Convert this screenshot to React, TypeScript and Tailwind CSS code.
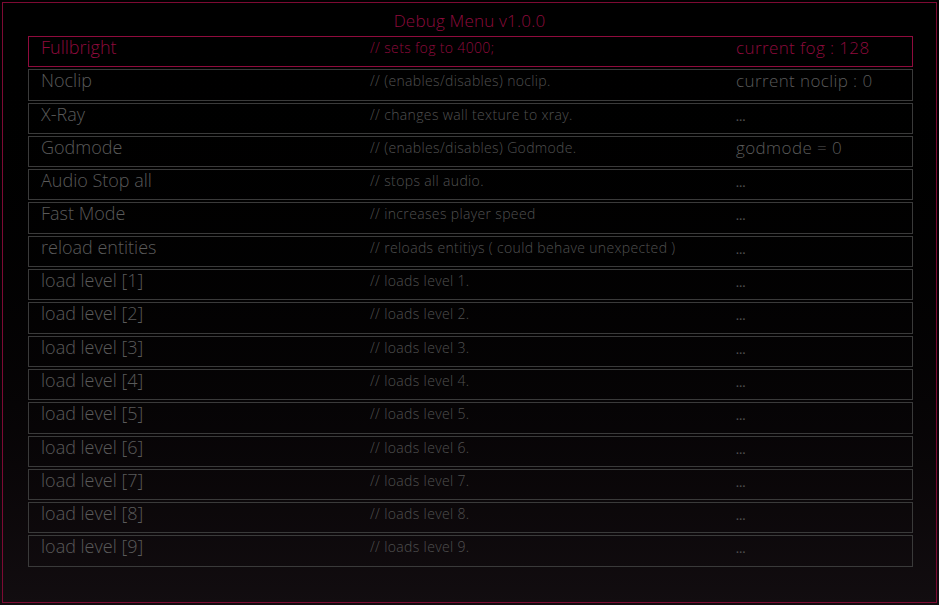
const rows: { name: string; desc: string; value: string }[] = [
    { name: "Fullbright", desc: "// sets fog to 4000;", value: "current fog : 128" },
    { name: "Noclip", desc: "// (enables/disables) noclip.", value: "current noclip : 0" },
    { name: "X-Ray", desc: "// changes wall texture to xray.", value: "..." },
    { name: "Godmode", desc: "// (enables/disables) Godmode.", value: "godmode = 0" },
    { name: "Audio Stop all", desc: "// stops all audio.", value: "..." },
    { name: "Fast Mode", desc: "// increases player speed", value: "..." },
    { name: "reload entities", desc: "// reloads entitiys ( could behave unexpected )", value: "..." },
    ...[1, 2, 3, 4, 5, 6, 7, 8, 9].map((n) => ({
        name: `load level [${n}]`,
        desc: `// loads level ${n}.`,
        value: "...",
    })),
];

const App = () => {
    return (
        <div
            className="w-[939px] h-[605px] p-[2px] bg-gradient-to-b from-black to-[#120d10]"
            style={{ fontFamily: '"Open Sans", "Noto Sans", sans-serif' }}
        >
            <div className="h-full border border-[#7d0a33] flex flex-col">
                <h1 className="text-center text-[17px] leading-none text-[#8f0b3d] pt-[9px] h-[33px] font-light tracking-[0.2px]">
                    Debug Menu v1.0.0
                </h1>

                <div className="flex flex-col gap-[2px] ml-[25px] mr-[23px]">
                    {rows.map((row, i) => {
                        const active = i === 0;
                        return (
                            <div
                                key={row.name}
                                className={`flex h-[31.3px] border ${
                                    active ? "border-[#8f0b3d] text-[#8f0b3d]" : "border-[#3a3a3a] text-[#5a5a5a]"
                                }`}
                            >
                                <div className="w-[341px] pl-[12px] text-[18px] leading-none pt-[1px] font-light">
                                    {row.name}
                                </div>
                                <div
                                    className={`w-[366px] text-[14px] leading-none pt-[4px] font-light tracking-[0.35px] ${
                                        active ? "" : "text-[#505050]"
                                    }`}
                                >
                                    {row.desc}
                                </div>
                                <div className="flex-1 text-[17px] leading-none pt-[2px] font-light tracking-[0.4px]">
                                    {row.value === "..." ? (
                                        <span className="text-[10px] text-[#505050] font-bold">...</span>
                                    ) : (
                                        row.value
                                    )}
                                </div>
                            </div>
                        );
                    })}
                </div>
            </div>
        </div>
    );
};

export default App;
